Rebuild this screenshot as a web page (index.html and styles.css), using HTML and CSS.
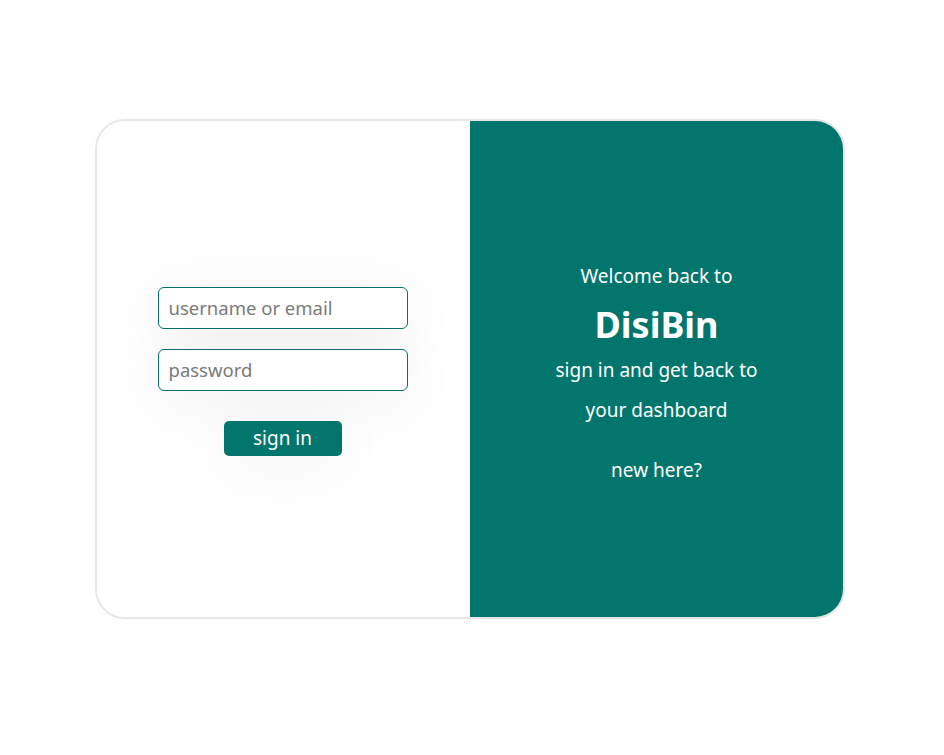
FILE: index.html
```html
<!DOCTYPE html>
<html lang="en">
<head>
<meta charset="utf-8">
<title>DisiBin - sign in</title>
<link rel="stylesheet" href="styles.css">
</head>
<body>
<main class="page">
  <div class="card">
    <section class="left">
      <form class="form">
        <input class="field" type="text" placeholder="username or email">
        <input class="field" type="password" placeholder="password">
        <button class="btn" type="button">sign in</button>
      </form>
    </section>
    <section class="right">
      <p class="welcome">Welcome back to</p>
      <h1 class="brand">DisiBin</h1>
      <p class="line">sign in and get back to</p>
      <p class="line">your dashboard</p>
      <p class="new">new here?</p>
    </section>
  </div>
</main>
</body>
</html>
```

FILE: styles.css
```css
* { box-sizing: border-box; }
html, body { margin: 0; padding: 0; background: #fff; }
body { font-family: "Noto Sans", "Open Sans", sans-serif; }
.page {
  padding-top: 119px;
  padding-left: 95px;
}
.card {
  width: 750px;
  height: 500px;
  border: 2px solid #e6e6e6;
  border-radius: 30px;
  display: grid;
  grid-template-columns: 1fr 1fr;
  overflow: hidden;
}
.left {
  display: flex;
  align-items: center;
  justify-content: center;
  background: #fff;
  padding-top: 4px;
  padding-right: 2px;
}
.form {
  display: flex;
  flex-direction: column;
  align-items: center;
  width: 250px;
}
.field {
  width: 250px;
  height: 42px;
  border: 1px solid #0b6e6a;
  border-radius: 6px;
  padding: 0 10px;
  font-family: inherit;
  font-size: 18.5px;
  color: #333;
  background: #fff;
  outline: none;
  margin-bottom: 20px;
  box-shadow: 0 10px 60px rgba(0,0,0,0.07);
}
.field::placeholder { color: #7a7a7a; }
.btn {
  margin-top: 10px;
  width: 118px;
  height: 35px;
  border: none;
  border-radius: 5px;
  background: #02766c;
  color: #fff;
  font-family: inherit;
  font-size: 19px;
  padding: 0;
  box-shadow: 0 10px 60px rgba(0,0,0,0.06);
}
.right {
  background: #02766c;
  color: #fff;
  display: flex;
  flex-direction: column;
  align-items: center;
  justify-content: center;
  text-align: center;
  padding-top: 12px;
}
.right p, .right h1 { margin: 0; }
.welcome { font-size: 19px; line-height: 30px; }
.brand { font-size: 36px; font-weight: 700; line-height: 50px; margin-top: 9px !important; }
.line { font-size: 19px; line-height: 40px; }
.new { font-size: 19px; line-height: 40px; margin-top: 20px !important; }
```
